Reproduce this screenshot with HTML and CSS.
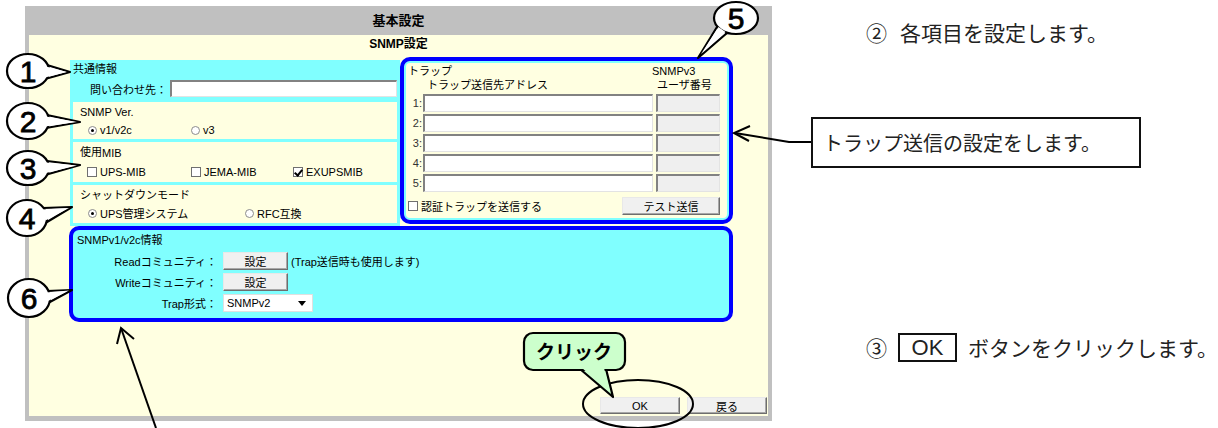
FILE: index.html
```html
<!DOCTYPE html>
<html lang="ja">
<head>
  <meta charset="UTF-8">
  <title>基本設定 - SNMP設定</title>
  <link rel="stylesheet" href="styles.css">
</head>
<body>
<div class="page">
  <div class="window">
    <div class="win-title">基本設定</div>
    <div class="win-body">
      <div class="sub-title">SNMP設定</div>

      <div class="snmp">
        <div class="left">
          <div class="common">
            <div class="cap">共通情報</div>
            <div class="contact">
              <label>問い合わせ先：</label>
              <span class="text grow"></span>
            </div>
          </div>
          <div class="box ver">
            <div class="cap">SNMP Ver.</div>
            <div class="opts">
              <span class="opt w103"><span class="radio on"></span>v1/v2c</span>
              <span class="opt"><span class="radio"></span>v3</span>
            </div>
          </div>
          <div class="box mib">
            <div class="cap">使用<small>MIB</small></div>
            <div class="opts mib-opts">
              <span class="opt w104"><span class="check"></span>UPS-MIB</span>
              <span class="opt w102"><span class="check"></span>JEMA-MIB</span>
              <span class="opt"><span class="check on"></span>EXUPSMIB</span>
            </div>
          </div>
          <div class="box shut">
            <div class="cap">シャットダウンモード</div>
            <div class="opts">
              <span class="opt w157"><span class="radio on"></span>UPS管理システム</span>
              <span class="opt"><span class="radio"></span>RFC互換</span>
            </div>
          </div>
        </div>

        <div class="trap">
          <div class="trap-head">
            <span class="th1">トラップ</span>
            <span>SNMPv3</span>
          </div>
          <div class="trap-head">
            <span class="th2">トラップ送信先アドレス</span>
            <span>ユーザ番号</span>
          </div>
          <div class="trap-rows">
            <div class="trap-row"><span class="num">1:</span><span class="text addr"></span><span class="text user"></span></div>
            <div class="trap-row"><span class="num">2:</span><span class="text addr"></span><span class="text user"></span></div>
            <div class="trap-row"><span class="num">3:</span><span class="text addr"></span><span class="text user"></span></div>
            <div class="trap-row"><span class="num">4:</span><span class="text addr"></span><span class="text user"></span></div>
            <div class="trap-row"><span class="num">5:</span><span class="text addr"></span><span class="text user"></span></div>
          </div>
          <div class="trap-foot">
            <span class="opt"><span class="check"></span>認証トラップを送信する</span>
            <button class="btn test">テスト送信</button>
          </div>
        </div>

        <div class="v2c">
          <div class="cap">SNMPv1/v2c情報</div>
          <div class="v2c-row">
            <label>Readコミュニティ：</label>
            <button class="btn set">設定</button>
            <span class="hint">(Trap送信時も使用します)</span>
          </div>
          <div class="v2c-row">
            <label>Writeコミュニティ：</label>
            <button class="btn set">設定</button>
          </div>
          <div class="v2c-row">
            <label>Trap形式：</label>
            <span class="select">SNMPv2</span>
          </div>
        </div>
      </div>

      <div class="actions">
        <button class="btn act">OK</button>
        <button class="btn act">戻る</button>
      </div>
    </div>
  </div>

  <div class="notes">
    <div class="step1"><span class="mark">②</span>各項目を設定します。</div>
    <div class="note-box">トラップ送信の設定をします。</div>
    <div class="step3"><span>③</span><span class="ok-box">OK</span>ボタンをクリックします。</div>
  </div>

  <svg class="marks" width="1218" height="428" viewBox="0 0 1218 428">
    <g class="callout">
      <path d="M47 65 L70 72 L45 79 Z"/>
      <ellipse cx="28" cy="71" rx="21" ry="17"/>
      <path class="cover" d="M46 66.5 L67 72 L45 77.5 Z"/>
      <text x="28" y="82">1</text>
    </g>
    <g class="callout">
      <path d="M47 115 L80 122 L46 128 Z"/>
      <ellipse cx="28" cy="121" rx="21" ry="18"/>
      <path class="cover" d="M46 116.5 L77 122 L45 126.5 Z"/>
      <text x="28" y="132">2</text>
    </g>
    <g class="callout">
      <path d="M47 161 L80 165 L45 175 Z"/>
      <ellipse cx="28" cy="168" rx="21" ry="17"/>
      <path class="cover" d="M46 162.5 L77 165.5 L44 173.5 Z"/>
      <text x="28" y="179">3</text>
    </g>
    <g class="callout">
      <path d="M43 208 L72 207 L47 222 Z"/>
      <ellipse cx="27" cy="218" rx="20" ry="18"/>
      <path class="cover" d="M42 209.5 L69 208 L45.5 220.5 Z"/>
      <text x="27" y="229">4</text>
    </g>
    <g class="callout">
      <path d="M47 291 L72 290 L48 303 Z"/>
      <ellipse cx="29" cy="298" rx="21" ry="19"/>
      <path class="cover" d="M46 292.5 L69 290.5 L47 301.5 Z"/>
      <text x="29" y="309">6</text>
    </g>
    <g class="callout">
      <path d="M717 27 L698 58 L727 33 Z"/>
      <ellipse cx="736" cy="18" rx="22" ry="16"/>
      <path class="cover" d="M718.5 27 L701 54 L725.5 32 Z"/>
      <text x="736" y="29">5</text>
    </g>

    <g class="arrow">
      <path d="M811 142 L789 142 L735 133"/>
      <path d="M750 126 L734 133 L749 141"/>
      <path d="M156 428 L121 328"/>
      <path d="M117 344 L121 328 L134 339"/>
    </g>

    <ellipse class="ring" cx="638" cy="404" rx="55" ry="24"/>

    <g class="bubble">
      <path d="M580 369 L613 397 L606 369 Z"/>
      <rect x="524" y="333" width="101" height="37" rx="9"/>
      <path class="cover" d="M582 368 L610 392 L604 368 Z"/>
      <text x="574" y="359">クリック</text>
    </g>
  </svg>
</div>
</body>
</html>
```

FILE: styles.css
```css
* {
  box-sizing: border-box;
}
body {
  margin: 0;
  background: #fff;
  font-family: "Liberation Sans", "Noto Sans CJK JP", sans-serif;
  font-size: 11px;
  color: #000;
}
.page {
  position: relative;
  width: 1218px;
  height: 428px;
  display: flex;
  align-items: flex-start;
  overflow: hidden;
}

/* window */
.window {
  flex: none;
  margin: 6px 0 0 25px;
  width: 747px;
  height: 415px;
  background: #c0c0c0;
  padding: 0 4px 5px;
  display: flex;
  flex-direction: column;
}
.win-title {
  height: 29px;
  line-height: 29px;
  text-align: center;
  font-size: 13px;
  font-weight: bold;
}
.win-body {
  flex: 1;
  background: #ffffe1;
  display: flex;
  flex-direction: column;
}
.sub-title {
  height: 18px;
  line-height: 18px;
  text-align: center;
  font-size: 12px;
  font-weight: bold;
}

/* snmp block */
.snmp {
  margin: 4px 0 0 40px;
  width: 664px;
  display: grid;
  grid-template-columns: 331px 333px;
  grid-template-rows: 169px 96px;
}
.cap {
  line-height: 14px;
  white-space: nowrap;
}
.cap small {
  font-size: 11px;
  position: relative;
  top: 1px;
}
.left {
  margin: 3px 0 0 1px;
  background: #80ffff;
  padding: 0 3px 3px;
  display: flex;
  flex-direction: column;
  gap: 3px;
}
.common {
  height: 39px;
  padding-top: 2px;
}
.contact {
  display: flex;
  align-items: center;
  margin-top: 4px;
}
.contact label {
  width: 94px;
  text-align: right;
  margin-right: 3px;
}
.grow {
  flex: 1;
}
.box {
  background: #ffffe1;
  padding: 3px 7px 0;
}
.ver {
  height: 37px;
}
.mib {
  height: 40px;
}
.shut {
  height: 38px;
}
.opts {
  display: flex;
  align-items: center;
  height: 14px;
  margin-top: 4px;
  padding-left: 8px;
}
.mib-opts {
  margin-top: 6px;
  padding-left: 7px;
}
.opt {
  display: inline-flex;
  align-items: center;
  white-space: nowrap;
}
.w102 { width: 102px; }
.w103 { width: 103px; }
.w104 { width: 104px; }
.w157 { width: 157px; }

.radio {
  width: 9px;
  height: 9px;
  border-radius: 50%;
  border: 1px solid #8c8c8c;
  background: #fff;
  margin-right: 3px;
  position: relative;
}
.radio.on::after {
  content: "";
  position: absolute;
  left: 2px;
  top: 2px;
  width: 3px;
  height: 3px;
  border-radius: 50%;
  background: #000;
}
.check {
  width: 10px;
  height: 10px;
  border: 1px solid #707070;
  background: #fff;
  margin-right: 3px;
  position: relative;
}
.check.on::after {
  content: "";
  position: absolute;
  left: 2px;
  top: 0;
  width: 3px;
  height: 6px;
  border: solid #000;
  border-width: 0 2px 2px 0;
  transform: rotate(40deg);
}

.text {
  display: block;
  height: 17px;
  background: #fff;
  border: 1px solid #e3e3e3;
  border-top: 2px solid #828282;
  border-left: 2px solid #828282;
}

/* trap panel */
.trap {
  grid-column: 2;
  grid-row: 1;
  margin-bottom: 2px;
  border: 4px solid #0000ff;
  border-radius: 10px;
  box-shadow: inset 0 0 0 2px #80ffff;
  background: #ffffe1;
  padding: 3px 9px 0 4px;
}
.trap-head {
  display: flex;
  line-height: 14px;
  white-space: nowrap;
}
.th1 {
  width: 244px;
}
.th2 {
  width: 249px;
  padding-left: 19px;
}
.trap-rows {
  margin-top: 2px;
  display: flex;
  flex-direction: column;
  gap: 2px;
}
.trap-row {
  display: flex;
  align-items: center;
  height: 18px;
}
.num {
  width: 14px;
  text-align: right;
  margin-right: 1px;
  color: #333;
}
.addr {
  width: 230px;
  height: 18px;
}
.user {
  width: 64px;
  height: 18px;
  margin-left: 3px;
  background: #efefef;
}
.trap-foot {
  margin-top: 5px;
  display: flex;
  align-items: center;
  justify-content: space-between;
}

/* buttons */
.btn {
  font: inherit;
  color: #000;
  padding: 0;
  height: 18px;
  background: #f0f0f0;
  border: 1px solid;
  border-color: #e8e8e8 #6e6e6e #6e6e6e #e8e8e8;
  box-shadow: inset -1px -1px 0 #a8a8a8;
}
.test {
  width: 98px;
}
.set {
  width: 65px;
}

/* v1/v2c panel */
.v2c {
  grid-column: 1 / 3;
  grid-row: 2;
  border: 4px solid #0000ff;
  border-radius: 10px;
  background: #80ffff;
  padding: 3px 4px;
}
.v2c .cap {
  margin-bottom: 5px;
}
.v2c-row {
  display: flex;
  align-items: center;
  height: 18px;
  margin-bottom: 3px;
  white-space: nowrap;
}
.v2c-row label {
  width: 140px;
  text-align: right;
  margin-right: 6px;
}
.hint {
  margin-left: 3px;
}
.select {
  position: relative;
  width: 90px;
  height: 18px;
  line-height: 16px;
  background: #fff;
  border: 1px solid #e0e0e0;
  padding-left: 3px;
}
.select::after {
  content: "";
  position: absolute;
  right: 6px;
  top: 6px;
  border: 4px solid transparent;
  border-top: 5px solid #000;
}

.actions {
  margin-top: auto;
  display: flex;
  justify-content: flex-end;
  gap: 7px;
  padding: 0 1px 2px 0;
}
.act {
  width: 80px;
  height: 17px;
}

/* notes on the right */
.notes {
  flex: none;
  margin-left: 39px;
  display: flex;
  flex-direction: column;
  font-family: "Noto Sans CJK JP", sans-serif;
  font-size: 21px;
  color: #222;
}
.step1 {
  margin: 21px 0 0 55px;
  line-height: 22px;
  white-space: nowrap;
}
.mark {
  margin-right: 13px;
}
.note-box {
  margin-top: 74px;
  width: 330px;
  height: 51px;
  border: 2px solid #111;
  font-size: 20px;
  line-height: 47px;
  padding-left: 10px;
  white-space: nowrap;
}
.step3 {
  margin: 164px 0 0 55px;
  display: flex;
  align-items: center;
  white-space: nowrap;
}
.ok-box {
  width: 59px;
  height: 29px;
  border: 2px solid #111;
  margin: 0 11px;
  font-family: "Liberation Sans", sans-serif;
  font-size: 22px;
  line-height: 25px;
  text-align: center;
}

/* annotation layer */
.marks {
  position: absolute;
  left: 0;
  top: 0;
  pointer-events: none;
}
.callout path,
.callout ellipse {
  fill: #fff;
  stroke: #000;
  stroke-width: 2.2;
  stroke-linejoin: round;
}
.callout .cover,
.bubble .cover {
  stroke: none;
}
.callout text {
  font-family: "Liberation Sans", sans-serif;
  font-size: 30px;
  text-anchor: middle;
  fill: #000;
  stroke: #000;
  stroke-width: 0.8;
}
.arrow path {
  fill: none;
  stroke: #000;
  stroke-width: 2;
}
.ring {
  fill: none;
  stroke: #000;
  stroke-width: 2;
}
.bubble path,
.bubble rect {
  fill: #ccffcc;
  stroke: #000;
  stroke-width: 2.2;
  stroke-linejoin: round;
}
.bubble text {
  font-family: "Noto Sans CJK JP", sans-serif;
  font-size: 19px;
  font-weight: bold;
  text-anchor: middle;
  fill: #000;
}
```
